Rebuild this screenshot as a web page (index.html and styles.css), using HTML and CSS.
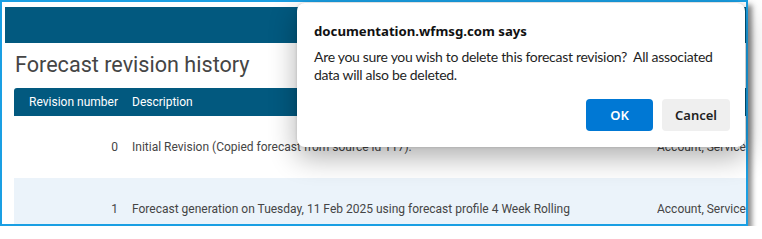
FILE: index.html
```html
<!DOCTYPE html>
<html lang="en">
<head>
    <meta charset="UTF-8">
    <title>Forecast revision history</title>
    <link rel="stylesheet" href="styles.css">
</head>
<body>

  <div class="frame">
    <div class="page">
      <div class="topbar"></div>

      <div class="content">
        <h1 class="title">Forecast revision history</h1>

        <table class="grid">
          <thead>
            <tr>
              <th class="num">Revision number</th>
              <th class="desc">Description</th>
              <th class="dims"></th>
            </tr>
          </thead>
          <tbody>
            <tr>
              <td class="num">0</td>
              <td class="desc">Initial Revision (Copied forecast from source id 117).</td>
              <td class="dims">Account, Service</td>
            </tr>
            <tr class="alt">
              <td class="num">1</td>
              <td class="desc">Forecast generation on Tuesday, 11 Feb 2025 using forecast profile 4 Week Rolling</td>
              <td class="dims">Account, Service</td>
            </tr>
          </tbody>
        </table>
      </div>
    </div>

    <!-- browser confirm() box -->
    <div class="dialog">
      <div class="dialog-title">documentation.wfmsg.com says</div>
      <div class="dialog-msg">Are you sure you wish to delete this forecast revision?&nbsp; All associated data will also be deleted.</div>
      <div class="dialog-buttons">
        <button class="btn btn-ok">OK</button>
        <button class="btn btn-cancel">Cancel</button>
      </div>
    </div>
  </div>

</body>
</html>
```

FILE: styles.css
```css
:root {
  --frame-blue: #1a9fe3;
  --brand: #02597f;
  --text: #454545;
}

body {
  margin: 0;
  background: #fff;
  font-family: Roboto, Arial, sans-serif;
}

.frame {
  position: relative;
  width: 748px;
  height: 226px;
  box-sizing: border-box;
  border: 2px solid var(--frame-blue);
  box-shadow: 4px 5px 5px rgba(0, 0, 0, 0.45);
  background: #fff;
}

.page {
  height: 100%;
  overflow: hidden;
  padding: 5px 0 0 3px;
  box-sizing: border-box;
}

.topbar {
  height: 36px;
  background: var(--brand);
}

.content {
  padding-left: 9px;
}

.title {
  margin: 9px 0 10px 1px;
  font-size: 21.6px;
  line-height: 26px;
  font-weight: 400;
  color: var(--text);
}

.grid {
  width: 843px;
  table-layout: fixed;
  border-collapse: collapse;
  font-size: 12px;
  color: var(--text);
  white-space: nowrap;
}

.grid th {
  height: 28px;
  padding: 0;
  background: var(--brand);
  color: #fff;
  font-weight: 400;
  text-align: left;
}

.grid th:first-child {
  border-top-left-radius: 3px;
}

.grid td {
  height: 62px;
  padding: 0;
  vertical-align: middle;
  overflow: hidden;
}

.grid .num {
  width: 104px;
  padding-right: 8px;
  text-align: right;
}

.grid .desc {
  width: 525px;
  padding-left: 6px;
}

.grid .dims {
  width: 200px;
}

.grid tr.alt td {
  background: #ebf3fa;
}

.dialog {
  position: absolute;
  top: 1px;
  left: 295px;
  width: 448px;
  height: 144px;
  box-sizing: border-box;
  padding: 19px 15px 16px 17px;
  background: #fff;
  border-radius: 8px;
  box-shadow: 0 10px 28px rgba(0, 0, 0, 0.32), 0 0 3px rgba(0, 0, 0, 0.15);
  font-family: "Noto Sans", "Open Sans", sans-serif;
  color: #1f1f1f;
  display: flex;
  flex-direction: column;
}

.dialog-title {
  font-size: 13.2px;
  font-weight: 700;
  line-height: 18px;
  color: #111;
}

.dialog-msg {
  margin-top: 8px;
  font-family: Lato, "Noto Sans", sans-serif;
  font-size: 14px;
  letter-spacing: -0.3px;
  line-height: 18px;
}

.dialog-buttons {
  margin-top: auto;
  display: flex;
  justify-content: flex-end;
  gap: 9px;
}

.btn {
  height: 32px;
  border: 0;
  border-radius: 4px;
  font-family: inherit;
  font-size: 13px;
  font-weight: 600;
  cursor: pointer;
}

.btn-ok {
  width: 67px;
  background: #0078d4;
  color: #fff;
}

.btn-cancel {
  width: 68px;
  background: #efefef;
  color: #1f1f1f;
}
```
